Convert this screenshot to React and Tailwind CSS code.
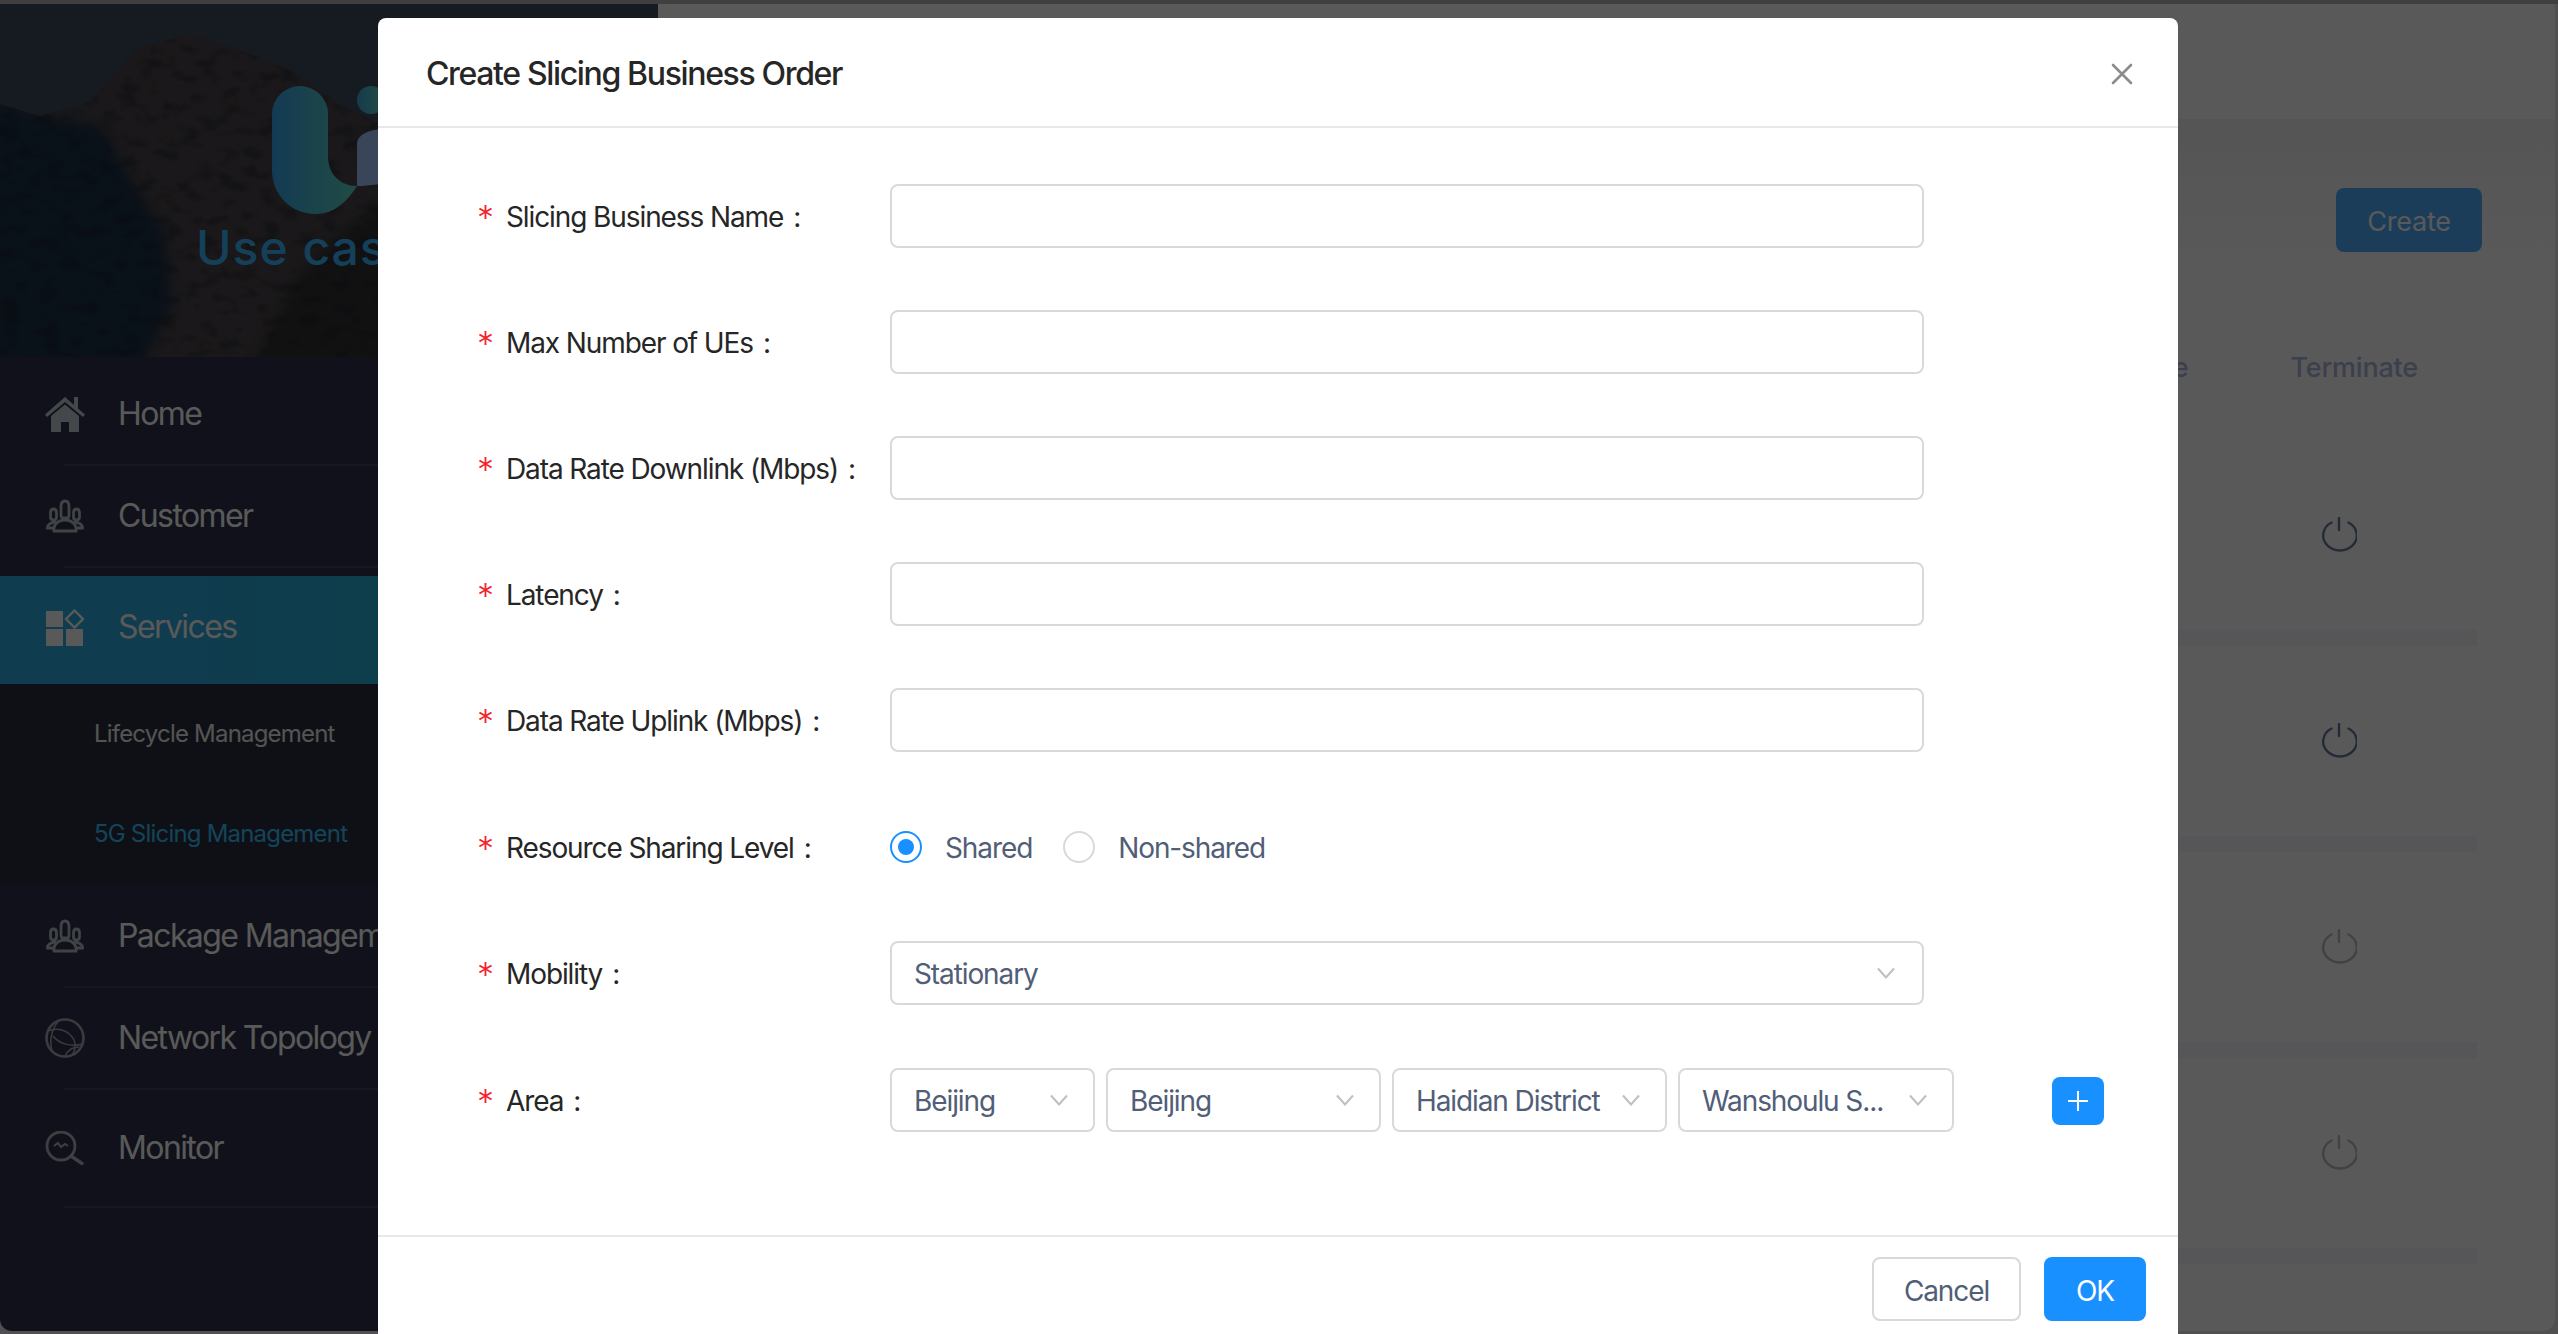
import React from "react";

function HomeIcon() {
  return (
    <svg width="40" height="37" viewBox="0 0 40 37" fill="#c4ced4">
      <path d="M20 2 L29 10 V2 H33 V13.5 L40 19.5 L38 22 L20 7 L2 22 L0 19.5 Z" />
      <path d="M6 21 L20 9.5 L34 21 V37 H24 V27 H16 V37 H6 Z" />
    </svg>
  );
}

function TeamIcon() {
  return (
    <svg width="38" height="34" viewBox="0 0 38 34" fill="none" stroke="#b8c0c6" strokeWidth="2.8">
      <path d="M19 2 c-3 0 -4 3 -4 6 v8 c0 2 1 3 2 3 h4 c1 0 2 -1 2 -3 v-8 c0 -3 -1 -6 -4 -6z" />
      <path d="M7.5 10 c-2 0 -3 2 -3 4 v4 c0 2 1 3 3 3 s3 -1 3 -3 v-4 c0 -2 -1 -4 -3 -4z" />
      <path d="M30.5 10 c-2 0 -3 2 -3 4 v4 c0 2 1 3 3 3 s3 -1 3 -3 v-4 c0 -2 -1 -4 -3 -4z" />
      <path d="M8 32 H30 C31 26 26 21 19 21 C12 21 7 26 8 32z" />
      <path d="M10 23 C5 23 1 26 1.500 29 H7 M28 23 C33 23 37 26 36.500 29 H31" />
    </svg>
  );
}

function ServicesIcon() {
  return (
    <svg width="38" height="37" viewBox="0 0 38 37" fill="#fff">
      <rect x="0" y="2" width="17" height="16" />
      <rect x="0" y="20" width="17" height="17" />
      <rect x="20" y="20" width="17" height="17" />
      <path d="M28.500 1.500 L37 10 L28.500 18.500 L20 10 Z" fill="none" stroke="#fff" strokeWidth="2.4" />
    </svg>
  );
}

function GlobeIcon() {
  return (
    <svg width="40" height="40" viewBox="0 0 40 40" fill="none" stroke="#a4acb2" strokeWidth="1.500">
      <circle cx="20" cy="20" r="18.500" strokeWidth="2.600" />
      <path d="M14 2.500 C7 10 4 22 7 33" />
      <path d="M3 13 C12 9 24 12 29 22 C31 27 30 33 27 37" />
      <path d="M8 18 C14 26 26 29 38 26" />
      <path d="M20 38 C23 32 28 29 34 29" />
    </svg>
  );
}

function MonitorIcon() {
  return (
    <svg width="40" height="34" viewBox="0 0 40 34" fill="none" stroke="#b0b8be" strokeWidth="2.8">
      <circle cx="16" cy="15" r="14" />
      <path d="M26 25 L37 32.500" strokeLinecap="round" strokeWidth="3.400" />
      <path d="M9 15 L13 12 L16 16 L20 13 L23 15" strokeWidth="2" />
    </svg>
  );
}

function PowerIcon({ color }) {
  return (
    <svg width="36" height="36" viewBox="0 0 36 36" fill="none" stroke={color} strokeWidth="2.400" strokeLinecap="round">
      <path d="M10.500 5.500 A16.800 15 0 1 0 27.500 5.500" />
      <path d="M18 1 V13" />
    </svg>
  );
}

function Chevron() {
  return (
    <svg width="18" height="12" viewBox="0 0 18 12" fill="none" stroke="#bfbfbf" strokeWidth="2" className="shrink-0">
      <path d="M1 1.500 L9 10.500 L17 1.500" />
    </svg>
  );
}

function Banner() {
  return (
    <div className="relative h-[353px] overflow-hidden bg-[#3f4b60]">
      <svg width="658" height="353" viewBox="0 0 658 353" className="absolute inset-0">
        <defs>
          <filter id="soft" x="-5%" y="-5%" width="110%" height="110%">
            <feGaussianBlur stdDeviation="6" />
          </filter>
          <filter id="rock" x="0" y="0" width="100%" height="100%" colorInterpolationFilters="sRGB">
            <feTurbulence type="fractalNoise" baseFrequency="0.05 0.09" numOctaves="4" seed="11" />
            <feColorMatrix values="0 0 0 0 0.1  0 0 0 0 0.12  0 0 0 0 0.15  0 0 0 5 -2.600" />
            <feGaussianBlur stdDeviation="0.800" />
          </filter>
          <clipPath id="ridge">
            <path d="M0 100 L40 112 L90 98 L135 45 L190 30 L240 46 L290 66 L340 100 L400 130 L658 320 V353 H0 Z" />
          </clipPath>
          <linearGradient id="uFill" x1="0" y1="0" x2="1" y2="0">
            <stop offset="0" stopColor="#38a8f0" />
            <stop offset="1" stopColor="#5fd8c0" />
          </linearGradient>
          <linearGradient id="dotFill" x1="0" y1="0" x2="1" y2="0">
            <stop offset="0" stopColor="#40a8dc" />
            <stop offset="1" stopColor="#5fd8c0" />
          </linearGradient>
        </defs>
        <g clipPath="url(#ridge)">
          <rect width="658" height="353" fill="#4c464a" />
          <g filter="url(#soft)">
            <path d="M-10 95 L25 108 L60 115 L100 122 L128 170 L165 230 L172 300 L140 365 H-10 Z" fill="#1a3348" />
            <path d="M250 365 L300 270 L345 225 L378 205 L460 240 L560 365 Z" fill="#323036" />
          </g>
          <rect width="658" height="353" filter="url(#rock)" opacity="0.4" />
        </g>
        <path d="M272 110 a28 28 0 0 1 56 0 v42 c0 18 12 30 29 30 C346 200 332 210 316 210 C290 210 272 190 272 166 Z" fill="url(#uFill)" />
        <circle cx="371" cy="96" r="14" fill="url(#dotFill)" />
        <path d="M357 139 a28 14 0 0 1 56 0 v20 c0 14 -30 23 -56 23 Z" fill="#a4c8ff" />
      </svg>
      <span className="absolute left-[196px] top-[216px] text-[48px] leading-[56px] font-medium tracking-[1px] text-[#3cb8ff]">
        Use case
      </span>
    </div>
  );
}

function NavRow({ icon, children, className = "" }) {
  return (
    <div className={`flex items-center gap-[33px] pl-[45px] text-[32px] tracking-[-1.6px] text-white whitespace-nowrap ${className}`}>
      <span className="flex w-[40px] justify-center">{icon}</span>
      <span>{children}</span>
    </div>
  );
}

function Sidebar() {
  return (
    <aside className="flex w-[658px] shrink-0 flex-col overflow-hidden rounded-bl-xl bg-[#2e334a]">
      <Banner />
      <NavRow icon={<HomeIcon />} className="h-[107px] border-b-0 pt-[6px]">Home</NavRow>
      <div className="ml-16 h-[2px] bg-[#3f4556]" />
      <NavRow icon={<TeamIcon />} className="h-[100px]">Customer</NavRow>
      <div className="ml-16 h-[2px] bg-[#3f4556]" />
      <div className="h-2" />
      <NavRow icon={<ServicesIcon />} className="h-[108px] bg-gradient-to-r from-[#2dabe3] to-[#26b2d4] pb-[6px]">Services</NavRow>
      <div className="bg-[#282e3c] pl-[94px] text-[24px] tracking-[-0.8px]">
        <div className="flex h-[100px] items-center text-[#f0f0f0]">Lifecycle Management</div>
        <div className="flex h-[100px] items-center text-[#39c2ff]">5G Slicing Management</div>
      </div>
      <NavRow icon={<TeamIcon />} className="h-[102px] pt-[2px]">Package Management</NavRow>
      <div className="ml-16 h-[2px] bg-[#3f4556]" />
      <NavRow icon={<GlobeIcon />} className="h-[100px]">Network Topology</NavRow>
      <div className="ml-16 h-[2px] bg-[#3f4556]" />
      <NavRow icon={<MonitorIcon />} className="h-[116px]">Monitor</NavRow>
      <div className="ml-16 h-[2px] bg-[#3f4556]" />
    </aside>
  );
}

const rowColors = ["#677aa0", "#677aa0", "#bdbdbd", "#bdbdbd"];

function MainArea() {
  return (
    <main className="flex flex-1 flex-col overflow-hidden rounded-br-xl">
      <div className="h-[115px] shrink-0 bg-white" />
      <div className="flex flex-1 flex-col bg-gradient-to-b from-[#f2f2f2] to-white to-[12%] pt-[69px]">
        <div className="flex justify-end pr-[73px]">
          <button className="h-16 w-[146px] rounded-lg bg-[#4db0ff] pt-[5px] text-[27px] tracking-[-0.2px] text-white">Create</button>
        </div>
        <div className="mr-[78px] flex flex-col">
          <div className="flex h-[188px] items-center justify-end gap-[102px] pr-[59px] pt-[44px] text-[27px] font-medium tracking-[-0.2px] text-[#abb4dc]">
            <span>Activate</span>
            <span>Terminate</span>
          </div>
          {rowColors.map((color, i) => (
            <div key={i} className="flex flex-col">
              <div className="flex h-[190px] items-center justify-end bg-white pr-[120px]">
                <PowerIcon color={color} />
              </div>
              <div className="h-4 bg-[#f5f7fb]" />
            </div>
          ))}
        </div>
      </div>
    </main>
  );
}

function Field({ label, children, className = "" }) {
  return (
    <div className={`flex h-16 items-center ${className}`}>
      <div className="flex w-[412px] shrink-0 items-center pt-[2px] text-[#262626]">
        <span className="-ml-[1px] w-[29px] translate-y-[1px] text-[34px] leading-none font-light text-[#f5222d]">*</span>
        <span>{label}</span>
        <span className="ml-[10px]">:</span>
      </div>
      {children}
    </div>
  );
}

function TextInput() {
  return <input className="h-16 w-[1034px] rounded-lg border-2 border-[#d9d9d9] bg-white outline-none" />;
}

function Select({ value, className = "" }) {
  return (
    <div className={`flex h-16 items-center justify-between rounded-lg border-2 border-[#d9d9d9] pl-[22px] pr-[25px] whitespace-nowrap text-[#515e77] ${className}`}>
      <span className="pt-[2px]">{value}</span>
      <Chevron />
    </div>
  );
}

function Radio({ checked, label }) {
  return (
    <div className="flex items-center gap-[23px] text-[#515e77]">
      <span className={`flex h-8 w-8 items-center justify-center rounded-full border-2 ${checked ? "border-[#1890ff]" : "border-[#d9d9d9]"}`}>
        {checked && <span className="h-4 w-4 rounded-full bg-[#1890ff]" />}
      </span>
      <span className="pt-[2px]">{label}</span>
    </div>
  );
}

function Modal() {
  return (
    <div className="absolute left-[378px] top-[18px] flex w-[1800px] flex-col rounded-t-lg bg-white text-[28px] tracking-[-1.1px]">
      <div className="flex h-[110px] shrink-0 items-center justify-between border-b-2 border-[#e8e8e8] pl-[48px] pr-[45px] pt-[3px]">
        <h2 className="text-[32px] font-medium tracking-[-1.35px] text-[#262626]">Create Slicing Business Order</h2>
        <svg width="22" height="22" viewBox="0 0 22 22" fill="none" stroke="#8c8c8c" strokeWidth="2.600" strokeLinecap="round">
          <path d="M2 2 L20 20 M20 2 L2 20" />
        </svg>
      </div>
      <div className="flex h-[1107px] shrink-0 flex-col gap-[62px] pl-[100px] pt-[56px]">
        <Field label="Slicing Business Name"><TextInput /></Field>
        <Field label="Max Number of UEs"><TextInput /></Field>
        <Field label="Data Rate Downlink (Mbps)"><TextInput /></Field>
        <Field label="Latency"><TextInput /></Field>
        <Field label="Data Rate Uplink (Mbps)"><TextInput /></Field>
        <Field label="Resource Sharing Level" className="mt-[1px]">
          <div className="flex gap-[31px]">
            <Radio checked label="Shared" />
            <Radio label="Non-shared" />
          </div>
        </Field>
        <Field label="Mobility"><Select value="Stationary" className="w-[1034px] !pr-[27px]" /></Field>
        <Field label="Area" className="mt-[1px]">
          <div className="flex items-center gap-[11px]">
            <Select value="Beijing" className="w-[205px]" />
            <Select value="Beijing" className="w-[275px]" />
            <Select value="Haidian District" className="w-[275px]" />
            <Select value="Wanshoulu S..." className="w-[276px]" />
          </div>
          <button className="ml-[98px] mt-[1px] flex h-12 w-[52px] items-center justify-center rounded-lg bg-[#1890ff]">
            <svg width="22" height="22" viewBox="0 0 22 22" stroke="#fff" strokeWidth="2">
              <path d="M11 1 V21 M1 11 H21" />
            </svg>
          </button>
        </Field>
      </div>
      <div className="flex justify-end gap-[23px] border-t-2 border-[#e8e8e8] pb-5 pr-8 pt-5">
        <button className="h-16 w-[149px] rounded-lg border-2 border-[#d9d9d9] bg-white pt-[3px] text-[#515e77]">Cancel</button>
        <button className="h-16 w-[102px] rounded-lg bg-[#1890ff] pt-[3px] text-white">OK</button>
      </div>
    </div>
  );
}

export default function App() {
  return (
    <div className="relative h-[1334px] w-full overflow-hidden bg-[#e4e4e4] font-['Inter',sans-serif]">
      <div className="h-1 bg-[#b4b4b4]" />
      <div className="flex h-[1327px] pr-[3px]">
        <Sidebar />
        <MainArea />
      </div>
      <div className="absolute inset-0 bg-black/65" />
      <Modal />
    </div>
  );
}
